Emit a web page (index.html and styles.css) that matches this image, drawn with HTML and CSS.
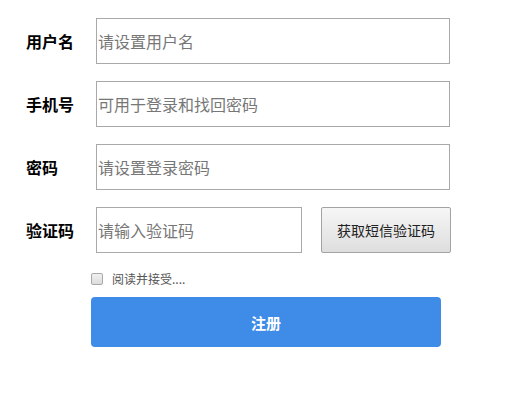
FILE: index.html
```html
<!DOCTYPE html>
<html>
<head>
<meta charset="utf-8">
<link rel="stylesheet" href="styles.css">
</head>
<body>
<form class="form">
  <div class="row">
    <label class="label">用户名</label>
    <input class="field" type="text" placeholder="请设置用户名">
  </div>
  <div class="row">
    <label class="label">手机号</label>
    <input class="field" type="text" placeholder="可用于登录和找回密码">
  </div>
  <div class="row">
    <label class="label">密码</label>
    <input class="field" type="password" placeholder="请设置登录密码">
  </div>
  <div class="row">
    <label class="label">验证码</label>
    <input class="field short" type="text" placeholder="请输入验证码">
    <button class="sms" type="button">获取短信验证码</button>
  </div>
  <div class="agree">
    <input class="check" type="checkbox">
    <span class="agree-text">阅读并接受....</span>
  </div>
  <button class="submit" type="button">注册</button>
</form>
</body>
</html>
```
FILE: styles.css
```css
html, body {
  margin: 0;
  padding: 0;
  background: #fff;
}
body {
  font-family: "Noto Sans CJK SC", "Liberation Sans", sans-serif;
}
.form {
  padding: 18px 0 0 26px;
  display: flex;
  flex-direction: column;
}
.row {
  display: flex;
  align-items: center;
  height: 46px;
  margin-bottom: 17px;
}
.label {
  width: 70px;
  font-size: 16px;
  font-weight: bold;
  color: #000;
}
.field {
  box-sizing: border-box;
  width: 354px;
  height: 46px;
  border: 1px solid #a9a9a9;
  margin: 0;
  padding: 0 1px;
  font-size: 16px;
  font-family: inherit;
  outline: none;
}
.field::placeholder {
  color: #777;
}
.field.short {
  width: 206px;
}
.sms {
  box-sizing: border-box;
  margin-left: 19px;
  width: 130px;
  height: 46px;
  border: 1px solid #a3a3a3;
  border-radius: 2px;
  background: linear-gradient(#f6f6f6, #dedede);
  font-family: inherit;
  font-size: 14px;
  color: #222;
  padding: 0;
}
.agree {
  display: flex;
  align-items: center;
  margin: 2px 0 0 65px;
  height: 13px;
}
.check {
  appearance: none;
  -webkit-appearance: none;
  box-sizing: border-box;
  margin: 0;
  width: 12px;
  height: 12px;
  border: 1px solid #a8a8a8;
  border-radius: 2px;
  background: linear-gradient(#f0f0f0, #dcdcdc);
}
.agree-text {
  margin-left: 9px;
  font-size: 12px;
  color: #555;
}
.submit {
  margin: 12px 0 0 65px;
  width: 350px;
  height: 50px;
  border: none;
  border-radius: 4px;
  background: #3f8be8;
  color: #fff;
  font-family: inherit;
  font-size: 15px;
  font-weight: bold;
}
```
